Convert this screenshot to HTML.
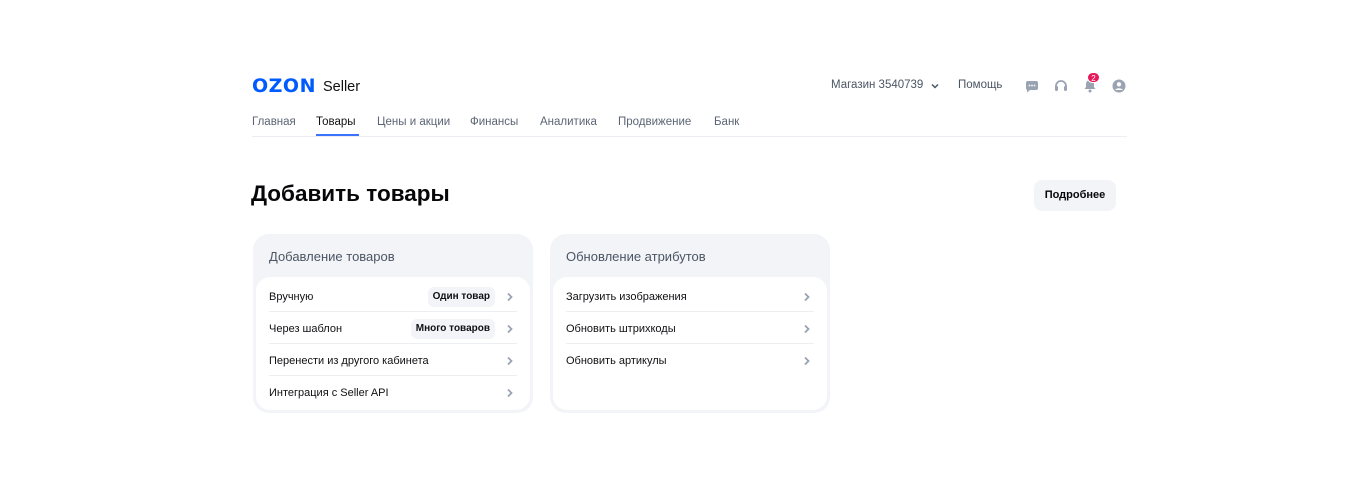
<!DOCTYPE html>
<html><head><meta charset="utf-8"><style>
*{margin:0;padding:0;box-sizing:border-box}
body{width:1360px;height:490px;background:#fff;font-family:"Liberation Sans","DejaVu Sans",sans-serif;position:relative;overflow:hidden;color:#07070a}
.a{position:absolute;white-space:nowrap}
.nav{font-size:11.5px;color:#5b6575;top:116px}
.card{position:absolute;top:234px;width:280px;height:179px;background:#f2f4f8;border-radius:16px}
.card h3{position:absolute;left:16px;top:15px;font-size:13px;font-weight:normal;color:#4b5563}
.inner{position:absolute;left:3px;top:43px;width:274px;height:133px;background:#fff;border-radius:14px}
.row{position:absolute;left:13px;width:248px;height:32px;font-size:11px;line-height:34px;color:#101014}
.row.b{border-bottom:1px solid #eceef2}
.chev{position:absolute;right:2px;top:12px;width:10px;height:10px}
.pill{position:absolute;top:7px;height:20px;line-height:20px;padding:0 5px;background:#f2f4f8;border-radius:6px;font-size:10px;font-weight:bold}
</style></head><body>
<div class="a" style="left:252px;top:75px;font-size:19px;font-weight:900;color:#005bff;font-family:'DejaVu Sans',sans-serif;letter-spacing:0.5px">OZON</div>
<div class="a" style="left:323px;top:79px;font-size:14.5px;color:#111">Seller</div>
<div class="a nav" style="left:252px">Главная</div>
<div class="a nav" style="left:316px;color:#111">Товары</div>
<div style="position:absolute;left:316px;top:134px;width:43px;height:2px;background:#3c74ff"></div>
<div class="a nav" style="left:377px">Цены и акции</div>
<div class="a nav" style="left:470px">Финансы</div>
<div class="a nav" style="left:540px">Аналитика</div>
<div class="a nav" style="left:618px">Продвижение</div>
<div class="a nav" style="left:714px">Банк</div>
<div style="position:absolute;left:252px;top:136px;width:875px;height:1px;background:#eceef4"></div>

<div class="a" style="left:831px;top:79px;font-size:11.5px;color:#4b5563">Магазин 3540739</div>
<svg class="a" style="left:930px;top:82px" width="10" height="8" viewBox="0 0 10 8"><path d="M2 2.5l3 3 3-3" stroke="#4b5563" stroke-width="1.5" fill="none"/></svg>
<div class="a" style="left:958px;top:79px;font-size:11.5px;color:#4b5563">Помощь</div>
<svg class="a" style="left:1025px;top:80px" width="14" height="13" viewBox="0 0 14 13"><path d="M1 3a2 2 0 012-2h8a2 2 0 012 2v5a2 2 0 01-2 2H5l-3 2.5V10a2 2 0 01-1-2z" fill="#9aa3b2"/><circle cx="4.5" cy="5.5" r=".9" fill="#fff"/><circle cx="7" cy="5.5" r=".9" fill="#fff"/><circle cx="9.5" cy="5.5" r=".9" fill="#fff"/></svg>
<svg class="a" style="left:1054px;top:79px" width="14" height="14" viewBox="0 0 14 14"><path d="M2 8V7a5 5 0 0110 0v1" stroke="#9aa3b2" stroke-width="1.8" fill="none"/><rect x="1" y="7" width="3" height="5" rx="1.2" fill="#9aa3b2"/><rect x="10" y="7" width="3" height="5" rx="1.2" fill="#9aa3b2"/></svg>
<svg class="a" style="left:1083px;top:79px" width="14" height="14" viewBox="0 0 14 14"><path d="M7 1a4 4 0 00-4 4v3l-1.5 2h11L11 8V5a4 4 0 00-4-4z" fill="#9aa3b2"/><circle cx="7" cy="12" r="1.5" fill="#9aa3b2"/></svg>
<div class="a" style="left:1087px;top:72px;width:13px;height:11px;border-radius:6px;background:#e8195a;color:#fff;font-size:8px;line-height:11px;text-align:center;border:1px solid #fff">2</div>
<svg class="a" style="left:1112px;top:79px" width="14" height="14" viewBox="0 0 14 14"><circle cx="7" cy="7" r="6.5" fill="#9aa3b2"/><circle cx="7" cy="5.3" r="2.2" fill="#fff"/><path d="M3 11a4.5 3.3 0 018 0" fill="#fff"/></svg>

<div class="a" style="left:251px;top:181px;font-size:22.5px;font-weight:bold;color:#07070a">Добавить товары</div>
<div class="a" style="left:1034px;top:180px;width:82px;height:31px;background:#f2f4f8;border-radius:8px;font-size:11px;font-weight:bold;line-height:31px;text-align:center">Подробнее</div>

<div class="card" style="left:253px"><h3>Добавление товаров</h3>
<div class="inner">
<div class="row b" style="top:3px">Вручную<span class="pill" style="right:22px">Один товар</span><svg class="chev" viewBox="0 0 10 10"><path d="M3 1.5l3.5 3.5L3 8.5" stroke="#9aa3b2" stroke-width="1.8" fill="none"/></svg></div>
<div class="row b" style="top:35px">Через шаблон<span class="pill" style="right:22px">Много товаров</span><svg class="chev" viewBox="0 0 10 10"><path d="M3 1.5l3.5 3.5L3 8.5" stroke="#9aa3b2" stroke-width="1.8" fill="none"/></svg></div>
<div class="row b" style="top:67px">Перенести из другого кабинета<svg class="chev" viewBox="0 0 10 10"><path d="M3 1.5l3.5 3.5L3 8.5" stroke="#9aa3b2" stroke-width="1.8" fill="none"/></svg></div>
<div class="row" style="top:99px">Интеграция с Seller API<svg class="chev" viewBox="0 0 10 10"><path d="M3 1.5l3.5 3.5L3 8.5" stroke="#9aa3b2" stroke-width="1.8" fill="none"/></svg></div>
</div></div>

<div class="card" style="left:550px"><h3>Обновление атрибутов</h3>
<div class="inner">
<div class="row b" style="top:3px">Загрузить изображения<svg class="chev" viewBox="0 0 10 10"><path d="M3 1.5l3.5 3.5L3 8.5" stroke="#9aa3b2" stroke-width="1.8" fill="none"/></svg></div>
<div class="row b" style="top:35px">Обновить штрихкоды<svg class="chev" viewBox="0 0 10 10"><path d="M3 1.5l3.5 3.5L3 8.5" stroke="#9aa3b2" stroke-width="1.8" fill="none"/></svg></div>
<div class="row" style="top:67px">Обновить артикулы<svg class="chev" viewBox="0 0 10 10"><path d="M3 1.5l3.5 3.5L3 8.5" stroke="#9aa3b2" stroke-width="1.8" fill="none"/></svg></div>
</div></div>
</body></html>
